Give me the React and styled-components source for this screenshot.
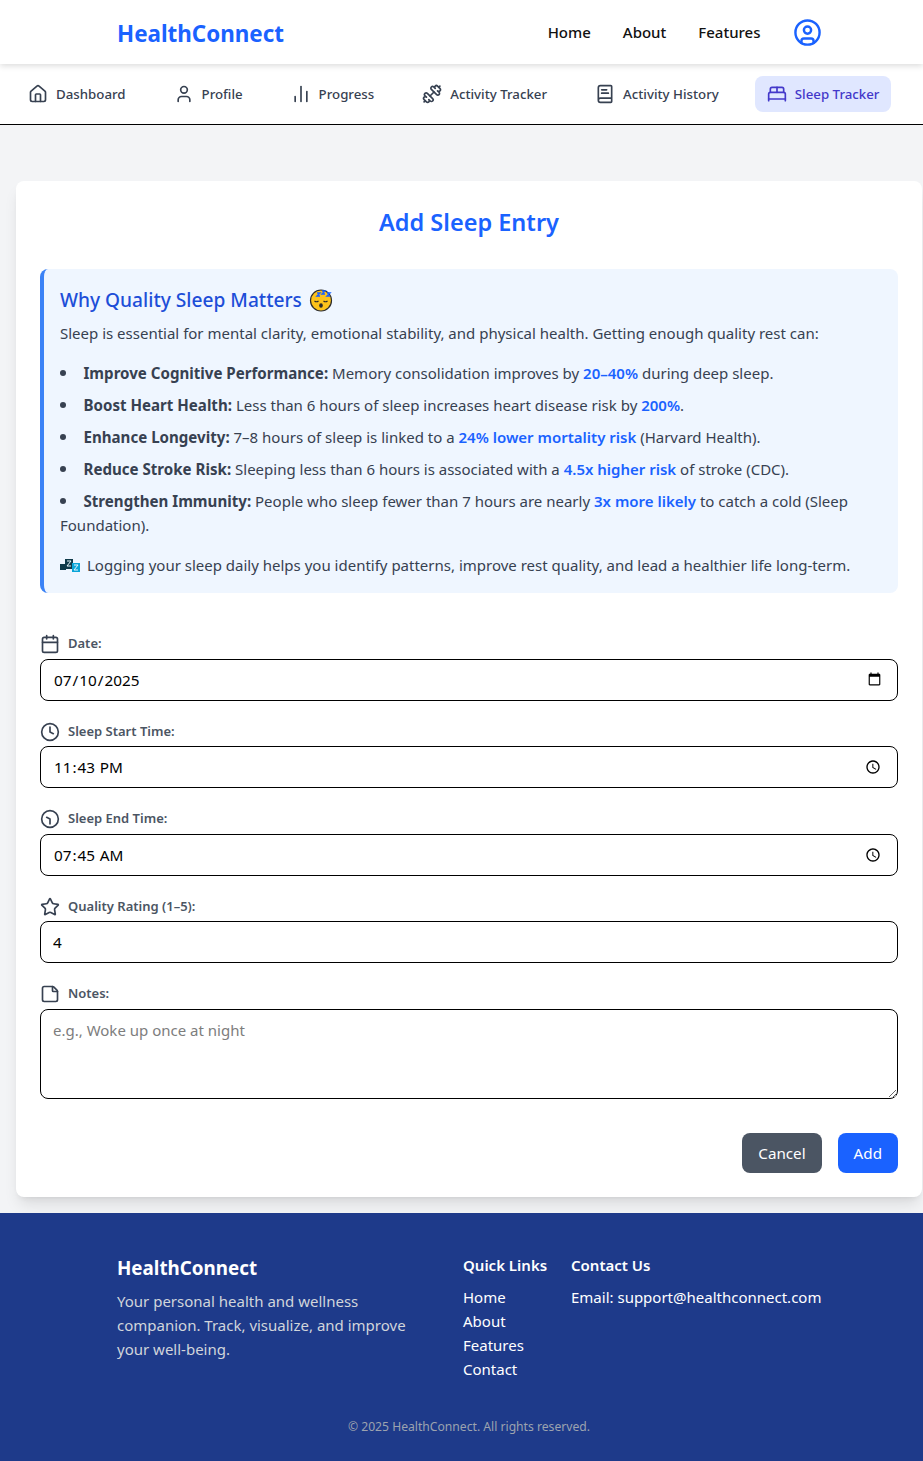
import React from "react";
import styled, { createGlobalStyle } from "styled-components";
import {
  House,
  User,
  ChartNoAxesColumn,
  Dumbbell,
  BookText,
  BedDouble,
  CircleUser,
  Calendar,
  Clock,
  Star,
  StickyNote,
} from "lucide-react";

const FONT = '"Noto Sans", "Open Sans", sans-serif';

const GlobalStyle = createGlobalStyle`
  * { box-sizing: border-box; }
  body {
    margin: 0;
    font-family: ${FONT};
    background: #f3f4f6;
  }
`;

const Navbar = styled.header`
  position: relative;
  z-index: 2;
  height: 64px;
  background: #fff;
  box-shadow: 0 2px 6px rgba(0, 0, 0, 0.14);
  padding: 0 101.5px 0 117px;
  display: flex;
  align-items: center;
  justify-content: space-between;
`;

const Logo = styled.div`
  font-size: 22.4px;
  font-weight: 700;
  color: #1a62ff;
  margin-top: 2px;
`;

const TopLinks = styled.nav`
  display: flex;
  align-items: center;
  gap: 32px;
  color: #111;
  font-size: 15px;
  font-weight: 500;
`;

const SubNav = styled.nav`
  height: 61px;
  background: #fff;
  border-bottom: 1px solid #000;
  padding: 0 0 0 16px;
  display: flex;
  align-items: center;
  gap: 24px;
`;

const SubItem = styled.a`
  display: flex;
  align-items: center;
  gap: 8px;
  height: 36px;
  padding: 0 12px;
  border-radius: 8px;
  font-size: 13.27px;
  font-weight: 500;
  white-space: nowrap;
  color: ${(p) => (p.$active ? "#4338ca" : "#374151")};
  background: ${(p) => (p.$active ? "#e0e7ff" : "transparent")};
`;

const Main = styled.main`
  padding: 56px 1px 16px 16px;
`;

const Card = styled.section`
  background: #fff;
  border-radius: 8px;
  box-shadow: 0 10px 15px -3px rgba(0, 0, 0, 0.1), 0 4px 6px -4px rgba(0, 0, 0, 0.1);
  padding: 24px;
`;

const Title = styled.h2`
  margin: 0 0 28px;
  height: 36px;
  line-height: 35px;
  text-align: center;
  font-size: 23.5px;
  font-weight: 600;
  color: #1a62ff;
`;

const InfoPanel = styled.div`
  background: #eff6ff;
  border-left: 4px solid #3b82f6;
  border-radius: 8px;
  padding: 16px;
  color: #374151;
  font-size: 15px;
  line-height: 24px;
`;

const InfoTitle = styled.h3`
  margin: 0 0 6px;
  display: flex;
  align-items: center;
  gap: 7px;
  height: 30px;
  font-size: 19.15px;
  font-weight: 500;
  color: #1d4ed8;
`;

const InfoText = styled.p`
  margin: 0;
  display: flex;
  align-items: center;
  gap: 7px;
`;

const Facts = styled.ul`
  list-style: disc inside;
  margin: 16px 0;
  padding: 0;
`;

const Fact = styled.li`
  margin-top: 8px;
  &::marker {
    font-size: 16.5px;
  }
  strong {
    font-size: 15.1px;
    font-weight: 700;
  }
`;

const Stat = styled.span`
  color: #1a62ff;
  font-weight: 600;
`;

const Form = styled.form`
  margin-top: 40.25px;
`;

const Field = styled.div`
  margin-bottom: 20px;
`;

const Label = styled.label`
  height: 25.5px;
  display: flex;
  align-items: flex-start;
  gap: 8px;
  font-size: 13px;
  line-height: 20px;
  font-weight: 600;
  color: #4b5563;
  svg {
    color: #374151;
    flex: none;
    margin-top: 1px;
  }
`;

const Input = styled.input`
  display: block;
  width: 100%;
  height: 42px;
  padding: 0 13px 0 12px;
  border: 1px solid #000;
  border-radius: 8px;
  background: #fff;
  color: #000;
  font-family: ${FONT};
  font-size: 15.3px;
`;

const TextArea = styled.textarea`
  display: block;
  width: 100%;
  height: 90px;
  padding: 8px 12px;
  border: 1px solid #000;
  border-radius: 8px;
  font-family: ${FONT};
  font-size: 15px;
  line-height: 24px;
  &::placeholder {
    color: #7d7d7d;
  }
`;

const EndClock = styled(Clock)`
  transform: rotate(180deg);
`;

const Actions = styled.div`
  display: flex;
  justify-content: flex-end;
  gap: 16px;
  margin-top: 34px;
`;

const Button = styled.button`
  height: 40px;
  padding: 0 16px;
  border: 0;
  border-radius: 8px;
  color: #fff;
  font-family: ${FONT};
  font-size: 15.2px;
  background: ${(p) => (p.$primary ? "#1a62ff" : "#4b5563")};
`;

const Footer = styled.footer`
  height: 248px;
  background: #1e3a8a;
  color: #fff;
  padding: 40px 102px 0 117px;
`;

const FooterGrid = styled.div`
  display: grid;
  grid-template-columns: 346px 108px 1fr;
`;

const FooterBrand = styled.div`
  font-size: 18.8px;
  font-weight: 700;
  line-height: 28px;
  margin-bottom: 7px;
  margin-top: 1px;
`;

const FooterText = styled.p`
  margin: 0;
  width: 300px;
  font-size: 15px;
  line-height: 24px;
  color: #d1d5db;
`;

const FooterHeading = styled.div`
  font-size: 15px;
  font-weight: 600;
  line-height: 24px;
  margin-bottom: 8px;
`;

const FooterLink = styled.div`
  font-size: 15px;
  line-height: 24px;
  white-space: nowrap;
`;

const Copyright = styled.div`
  margin-top: 36px;
  text-align: center;
  font-size: 12.15px;
  line-height: 20px;
  color: #9ca3af;
`;

const SleepFace = () => (
  <svg width="24" height="24" viewBox="0 0 24 24">
    <circle cx="12" cy="12.5" r="10.5" fill="#fcc21b" stroke="#2b2b2b" strokeWidth="1.2" />
    <path d="M5.5 13q2 1.5 4 0M14.500 13q2 1.5 4 0" fill="none" stroke="#2b2b2b" strokeWidth="1.2" />
    <ellipse cx="12" cy="17.500" rx="1.800" ry="2.200" fill="#2b2b2b" />
    <path d="M8 5h3l-3 3h3M13 3h3l-3 3h3M18 5h3l-3 3h3" fill="none" stroke="#1a62ff" strokeWidth="1.400" />
  </svg>
);

const ZzzIcon = () => (
  <svg width="20" height="13" viewBox="0 0 20 13">
    <rect x="0" y="5" width="6" height="6" fill="#0f3a4a" />
    <rect x="5" y="0" width="8" height="10" fill="#0f3a4a" />
    <rect x="12" y="4" width="8" height="9" fill="#0aa5d8" />
    <path d="M7 2h4l-4 5h4M14 6h4l-4 5h4" fill="none" stroke="#e8f6fb" strokeWidth="1" />
  </svg>
);

const subItems = [
  { label: "Dashboard", icon: House },
  { label: "Profile", icon: User },
  { label: "Progress", icon: ChartNoAxesColumn },
  { label: "Activity Tracker", icon: Dumbbell },
  { label: "Activity History", icon: BookText },
  { label: "Sleep Tracker", icon: BedDouble, active: true },
];

const quickLinks = ["Home", "About", "Features", "Contact"];

const App = () => {
  return (
    <>
      <GlobalStyle />
      <Navbar>
        <Logo>HealthConnect</Logo>
        <TopLinks>
          <span>Home</span>
          <span>About</span>
          <span>Features</span>
          <CircleUser size={29} color="#1a62ff" strokeWidth={2} />
        </TopLinks>
      </Navbar>
      <SubNav>
        {subItems.map((item) => (
          <SubItem key={item.label} $active={item.active}>
            <item.icon size={20} strokeWidth={2} />
            {item.label}
          </SubItem>
        ))}
      </SubNav>
      <Main>
        <Card>
          <Title>Add Sleep Entry</Title>
          <InfoPanel>
            <InfoTitle>
              Why Quality Sleep Matters <SleepFace />
            </InfoTitle>
            <InfoText>
              Sleep is essential for mental clarity, emotional stability, and physical health.
              Getting enough quality rest can:
            </InfoText>
            <Facts>
              <Fact>
                <strong>Improve Cognitive Performance:</strong> Memory consolidation improves by{" "}
                <Stat>20–40%</Stat> during deep sleep.
              </Fact>
              <Fact>
                <strong>Boost Heart Health:</strong> Less than 6 hours of sleep increases heart
                disease risk by <Stat>200%</Stat>.
              </Fact>
              <Fact>
                <strong>Enhance Longevity:</strong> 7–8 hours of sleep is linked to a{" "}
                <Stat>24% lower mortality risk</Stat> (Harvard Health).
              </Fact>
              <Fact>
                <strong>Reduce Stroke Risk:</strong> Sleeping less than 6 hours is associated with
                a <Stat>4.5x higher risk</Stat> of stroke (CDC).
              </Fact>
              <Fact>
                <strong>Strengthen Immunity:</strong> People who sleep fewer than 7 hours are nearly{" "}
                <Stat>3x more likely</Stat> to catch a cold (Sleep Foundation).
              </Fact>
            </Facts>
            <InfoText>
              <ZzzIcon />
              <span>
                Logging your sleep daily helps you identify patterns, improve rest quality, and lead
                a healthier life long-term.
              </span>
            </InfoText>
          </InfoPanel>
          <Form>
            <Field>
              <Label>
                <Calendar size={20} /> Date:
              </Label>
              <Input type="date" defaultValue="2025-07-10" />
            </Field>
            <Field>
              <Label>
                <Clock size={20} /> Sleep Start Time:
              </Label>
              <Input type="time" defaultValue="23:43" />
            </Field>
            <Field>
              <Label>
                <EndClock size={20} /> Sleep End Time:
              </Label>
              <Input type="time" defaultValue="07:45" />
            </Field>
            <Field>
              <Label>
                <Star size={20} /> Quality Rating (1–5):
              </Label>
              <Input type="number" defaultValue="4" />
            </Field>
            <Field>
              <Label>
                <StickyNote size={20} /> Notes:
              </Label>
              <TextArea placeholder="e.g., Woke up once at night" />
            </Field>
            <Actions>
              <Button type="button">Cancel</Button>
              <Button type="button" $primary>
                Add
              </Button>
            </Actions>
          </Form>
        </Card>
      </Main>
      <Footer>
        <FooterGrid>
          <div>
            <FooterBrand>HealthConnect</FooterBrand>
            <FooterText>
              Your personal health and wellness companion. Track, visualize, and improve your
              well-being.
            </FooterText>
          </div>
          <div>
            <FooterHeading>Quick Links</FooterHeading>
            {quickLinks.map((link) => (
              <FooterLink key={link}>{link}</FooterLink>
            ))}
          </div>
          <div>
            <FooterHeading>Contact Us</FooterHeading>
            <FooterLink>Email: support@healthconnect.com</FooterLink>
          </div>
        </FooterGrid>
        <Copyright>© 2025 HealthConnect. All rights reserved.</Copyright>
      </Footer>
    </>
  );
};

export default App;
